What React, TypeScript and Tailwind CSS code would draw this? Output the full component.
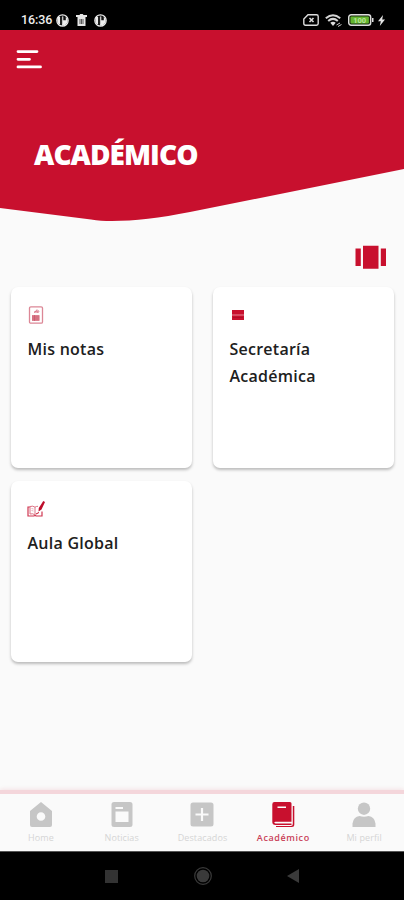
import type { ReactNode } from "react";

const StatusBar = () => (
  <div className="flex items-center justify-between h-[30px] pl-[21px] pr-[19px] pt-[10px] bg-black text-white">
    <div className="flex items-center h-5">
      <span className="w-[33px] text-[12.5px] font-medium leading-5 tracking-[-0.1px] whitespace-nowrap text-[#eee] font-[Roboto,sans-serif]">
        16:36
      </span>
      <NotificationIcon className="ml-[2px]" />
      <svg className="w-[11px] h-3 ml-[7px]" viewBox="0 0 11 12">
        <path d="M0 1h3.5l.7-1h2.6l.7 1H11v2H0zM1.5 3h8v9h-8z" fill="#e5e5e5" />
        <path d="M4 5v5M5.500 5v5M7 5v5" stroke="#333" strokeWidth="0.8" />
      </svg>
      <NotificationIcon className="ml-[7px]" />
    </div>

    <div className="flex items-center h-5">
      <svg className="w-4 h-3" viewBox="0 0 16 12" fill="none">
        <path
          d="M5 .8h8.500q1.700 0 1.700 1.700v7q0 1.700-1.700 1.700h-11Q.8 11.200.8 9.500V5z"
          stroke="#ddd"
          strokeWidth="1.400"
        />
        <path d="m6.500 4 4 4m0-4-4 4" stroke="#ddd" strokeWidth="1.600" />
      </svg>
      <svg className="w-[17px] h-[13px] ml-[6px]" viewBox="0 0 17 13" fill="none">
        <path
          d="M.8 4.200q7.200-6 14.400 0M3.200 6.900q4.800-4 9.600 0"
          stroke="#d5d5d5"
          strokeWidth="2"
        />
        <path d="M5.300 8.800q2.700-2.100 5.400 0L8 12z" fill="#ddd" />
        <path d="m11.500 11 3.500-2m-2 3.500 3.500-2" stroke="#ccc" />
      </svg>
      <svg className="w-[26px] h-3 ml-[6px]" viewBox="0 0 26 12">
        <rect x=".7" y=".7" width="22" height="10.600" rx="2.500" fill="#1c2b10" stroke="#ddd" strokeWidth="1.400" />
        <rect x="2.500" y="2.500" width="18.400" height="7" rx="1" fill="#63b52e" />
        <path d="M24 4h1.500v4H24z" fill="#ddd" />
        <text
          x="11.700"
          y="8.700"
          textAnchor="middle"
          fontSize="7.500"
          fontWeight="700"
          fontFamily="Roboto, sans-serif"
          fill="#b9e59a"
        >
          100
        </text>
      </svg>
      <svg className="w-[7px] h-[11px] ml-[4px]" viewBox="0 0 7 11">
        <path d="M5 0 0 6.200h2.800L1.800 11 7 4.500H4.200z" fill="#e5e5e5" />
      </svg>
    </div>
  </div>
);

const NotificationIcon = ({ className }: { className: string }) => (
  <svg className={`w-[13px] h-[13px] ${className}`} viewBox="0 0 13 13">
    <circle cx="6.500" cy="6.500" r="5.700" fill="#111" stroke="#eee" strokeWidth="1.200" />
    <path d="M6 2.500h1.300v3.800H9.800V3q2.300 1.500 2 4-.8 4.200-5.300 4.800H6z" fill="#eee" />
    <path d="M3.500 3h2.700v7.500H5L3.500 9z" fill="#222" />
    <path d="M2 3h2v7H2.500Q.5 6.500 2 3" fill="#eee" />
  </svg>
);

const Header = () => (
  <header className="grid h-[192px]">
    <svg className="w-full h-full col-start-1 row-start-1" viewBox="0 0 404 192">
      <path d="M0 0H404V139L190 182C160 188 134 191 112 191C104 191 98 190.500 91 189.500L0 178Z" fill="#c8102e" />
    </svg>
    <div className="z-10 flex flex-col items-start col-start-1 row-start-1">
      <button type="button" aria-label="Menú" className="mt-[19px] ml-4">
        <svg className="w-[27px] h-5" viewBox="0 0 27 20">
          <path
            d="M2 2.600h19M2 10.300h11.500M2 17.900h22.500"
            stroke="#fff"
            strokeWidth="2.800"
            strokeLinecap="round"
          />
        </svg>
      </button>
      <h1 className="mt-[65px] ml-[34px] text-[28px] font-extrabold leading-10 tracking-[-0.95px] text-white">
        ACADÉMICO
      </h1>
    </div>
  </header>
);

type CardProps = {
  icon: ReactNode;
  title: string;
};

const Card = ({ icon, title }: CardProps) => (
  <article className="h-[181px] pl-[17px] pr-10 pt-[18px] bg-white rounded-[7px] shadow-[0_2px_3px_rgba(0,0,0,0.25)]">
    <div className="flex items-center h-5">{icon}</div>
    <h2 className="mt-[11px] -ml-[0.5px] text-[16px] font-semibold leading-[27px] tracking-[0.25px] text-[#202020]">
      {title}
    </h2>
  </article>
);

const NotesIcon = () => (
  <svg className="w-4 h-[18px]" viewBox="0 0 16 18" fill="none">
    <rect x="1.500" y=".8" width="13" height="16.400" rx="1.300" stroke="#dc8796" strokeWidth="1.300" />
    <path d="M6 6.500 8.500 4.500l1 2M6.500 6h4.500M9 3.500l2 2" stroke="#d66c80" />
    <path d="M4 9h7.500v6H4z" fill="#dc8291" />
    <path d="M4 11h7.500M4 13h7.500M6.500 9v6" stroke="#c85065" strokeWidth=".6" />
  </svg>
);

const SecretaryIcon = () => (
  <svg className="w-3 h-[10px] ml-[2px]" viewBox="0 0 12 10">
    <path d="M0 0h12v10H0z" fill="#c8102e" />
    <path d="M0 5h12" stroke="#e68a99" />
    <path d="M1 7.500h10" stroke="#a60c25" strokeWidth=".7" />
  </svg>
);

const ClassroomIcon = () => (
  <svg className="w-[18px] h-4 -ml-[1px]" viewBox="0 0 18 16" fill="none">
    <path d="M3 6H1v9h6l1-.8 1 .8h6v-4.500" stroke="#cf3650" strokeWidth="1.200" />
    <path d="M3 5.500v7.500q3-1 5 1V6.200Q6 4.500 3 5.500M8 6.200q1.200-.9 3-.9" stroke="#dd7385" />
    <path d="M4.500 7.500 6.500 8m-2 1.500 2 .5" stroke="#e1a0ac" strokeWidth=".8" />
    <path d="M16.300 0 18 1l-3.500 7.500-3 2 .3-3.500z" fill="#bd0d2a" />
    <path d="m9 13 3-1.500" stroke="#c8102e" />
  </svg>
);

const cards = [
  { title: "Mis notas", icon: <NotesIcon /> },
  { title: "Secretaría Académica", icon: <SecretaryIcon /> },
  { title: "Aula Global", icon: <ClassroomIcon /> },
];

const tabs = [
  {
    label: "Home",
    icon: (
      <path
        fillRule="evenodd"
        d="M12 0 23 9v14q0 2-2 2H3q-2 0-2-2V9zM12 10.200a4.300 4.300 0 1 0 0 8.600 4.300 4.300 0 0 0 0-8.600"
      />
    ),
  },
  {
    label: "Noticias",
    icon: (
      <path
        fillRule="evenodd"
        d="M4 0h16q2.500 0 2.500 2.500v20Q22.500 25 20 25H4q-2.500 0-2.500-2.500v-20Q1.500 0 4 0m1.500 5v2H13V5zm0 4.500V20h13V9.500z"
      />
    ),
  },
  {
    label: "Destacados",
    icon: (
      <path
        fillRule="evenodd"
        d="M3 .5h18q2.500 0 2.500 2.500v19q0 2.500-2.500 2.500H3Q.5 24.500.5 22V3Q.5.500 3 .5m7.900 5.500v5.400H5.500v2.200h5.400V19h2.200v-5.400h5.400v-2.200h-5.400V6z"
      />
    ),
  },
  {
    label: "Académico",
    active: true,
    icon: (
      <>
        <path
          fillRule="evenodd"
          d="M3.500 0h15.500q1.500 0 1.500 1.500v18.300H4.500q-1.200 0-1.200.8t1.200.8h16V23H4.500Q1.300 23 1.300 20V2.200Q1.300 0 3.500 0m3 4.500V6H15V4.500z"
        />
        <path d="M21.800 4h1.500v18.500q0 2.500-2.500 2.500H5v-1h14.800q2 0 2-2z" />
      </>
    ),
  },
  {
    label: "Mi perfil",
    icon: (
      <>
        <circle cx="12" cy="6.700" r="6.200" />
        <path d="M.5 25v-3.500Q1.500 14.500 7.500 14q4.500 1.500 9 0 6 .5 7 7.500V25z" />
      </>
    ),
  },
];

const BottomNav = () => (
  <nav className="flex h-[61px] border-t-[4px] border-[#f4d6db] bg-[#fafafa] shadow-[0_-1px_4px_rgba(200,16,46,0.1)]">
    {tabs.map(({ label, icon, active }) => (
      <button
        key={label}
        type="button"
        className={`flex flex-col items-center flex-1 pt-2 pl-px ${active ? "text-[#c8102e]" : "text-[#c6c6c6]"}`}
      >
        <svg className="w-6 h-[25px]" viewBox="0 0 24 25" fill="currentColor">
          {icon}
        </svg>
        <span
          className={`mt-1 text-[9px] leading-[14px] whitespace-nowrap ${
            active ? "font-semibold tracking-[0.6px] text-[#c94057]" : "tracking-[0.1px] text-[#d5d5d5]"
          }`}
        >
          {label}
        </span>
      </button>
    ))}
  </nav>
);

const SystemNav = () => (
  <div className="flex items-center h-[49px] pl-[105px] pr-[105px] justify-between bg-black border-t border-[#555]">
    <div className="w-[13px] h-[13px] bg-[#333]" />
    <svg className="w-[18px] h-[18px]" viewBox="0 0 18 18">
      <circle cx="9" cy="9" r="8.300" fill="none" stroke="#3a3a3a" strokeWidth="1.200" />
      <circle cx="9" cy="9" r="6.300" fill="#3a3a3a" />
    </svg>
    <svg className="w-3 h-[14px]" viewBox="0 0 12 14">
      <path d="M12 0v14L0 7z" fill="#3a3a3a" />
    </svg>
  </div>
);

export default function App() {
  return (
    <div className="flex flex-col w-[404px] h-[900px] overflow-hidden bg-[#fafafa] font-['Open_Sans','Noto_Sans',sans-serif]">
      <StatusBar />
      <Header />
      <main className="flex-1">
        <div className="flex justify-end h-[65px] pt-[23px] pr-[17px]">
          <svg className="w-8 h-[25px]" viewBox="0 0 32 25" fill="#c8102e">
            <path d="M.5 3.500h5.300v17.500H.5zM8 .8h15.500v23H8zM25.800 3.500H31v17.500h-5.200z" />
          </svg>
        </div>
        <div className="grid grid-cols-[181px_181px] gap-x-[21px] gap-y-[13px] pl-[11px]">
          {cards.map((card) => (
            <Card key={card.title} {...card} />
          ))}
        </div>
      </main>
      <BottomNav />
      <SystemNav />
    </div>
  );
}
